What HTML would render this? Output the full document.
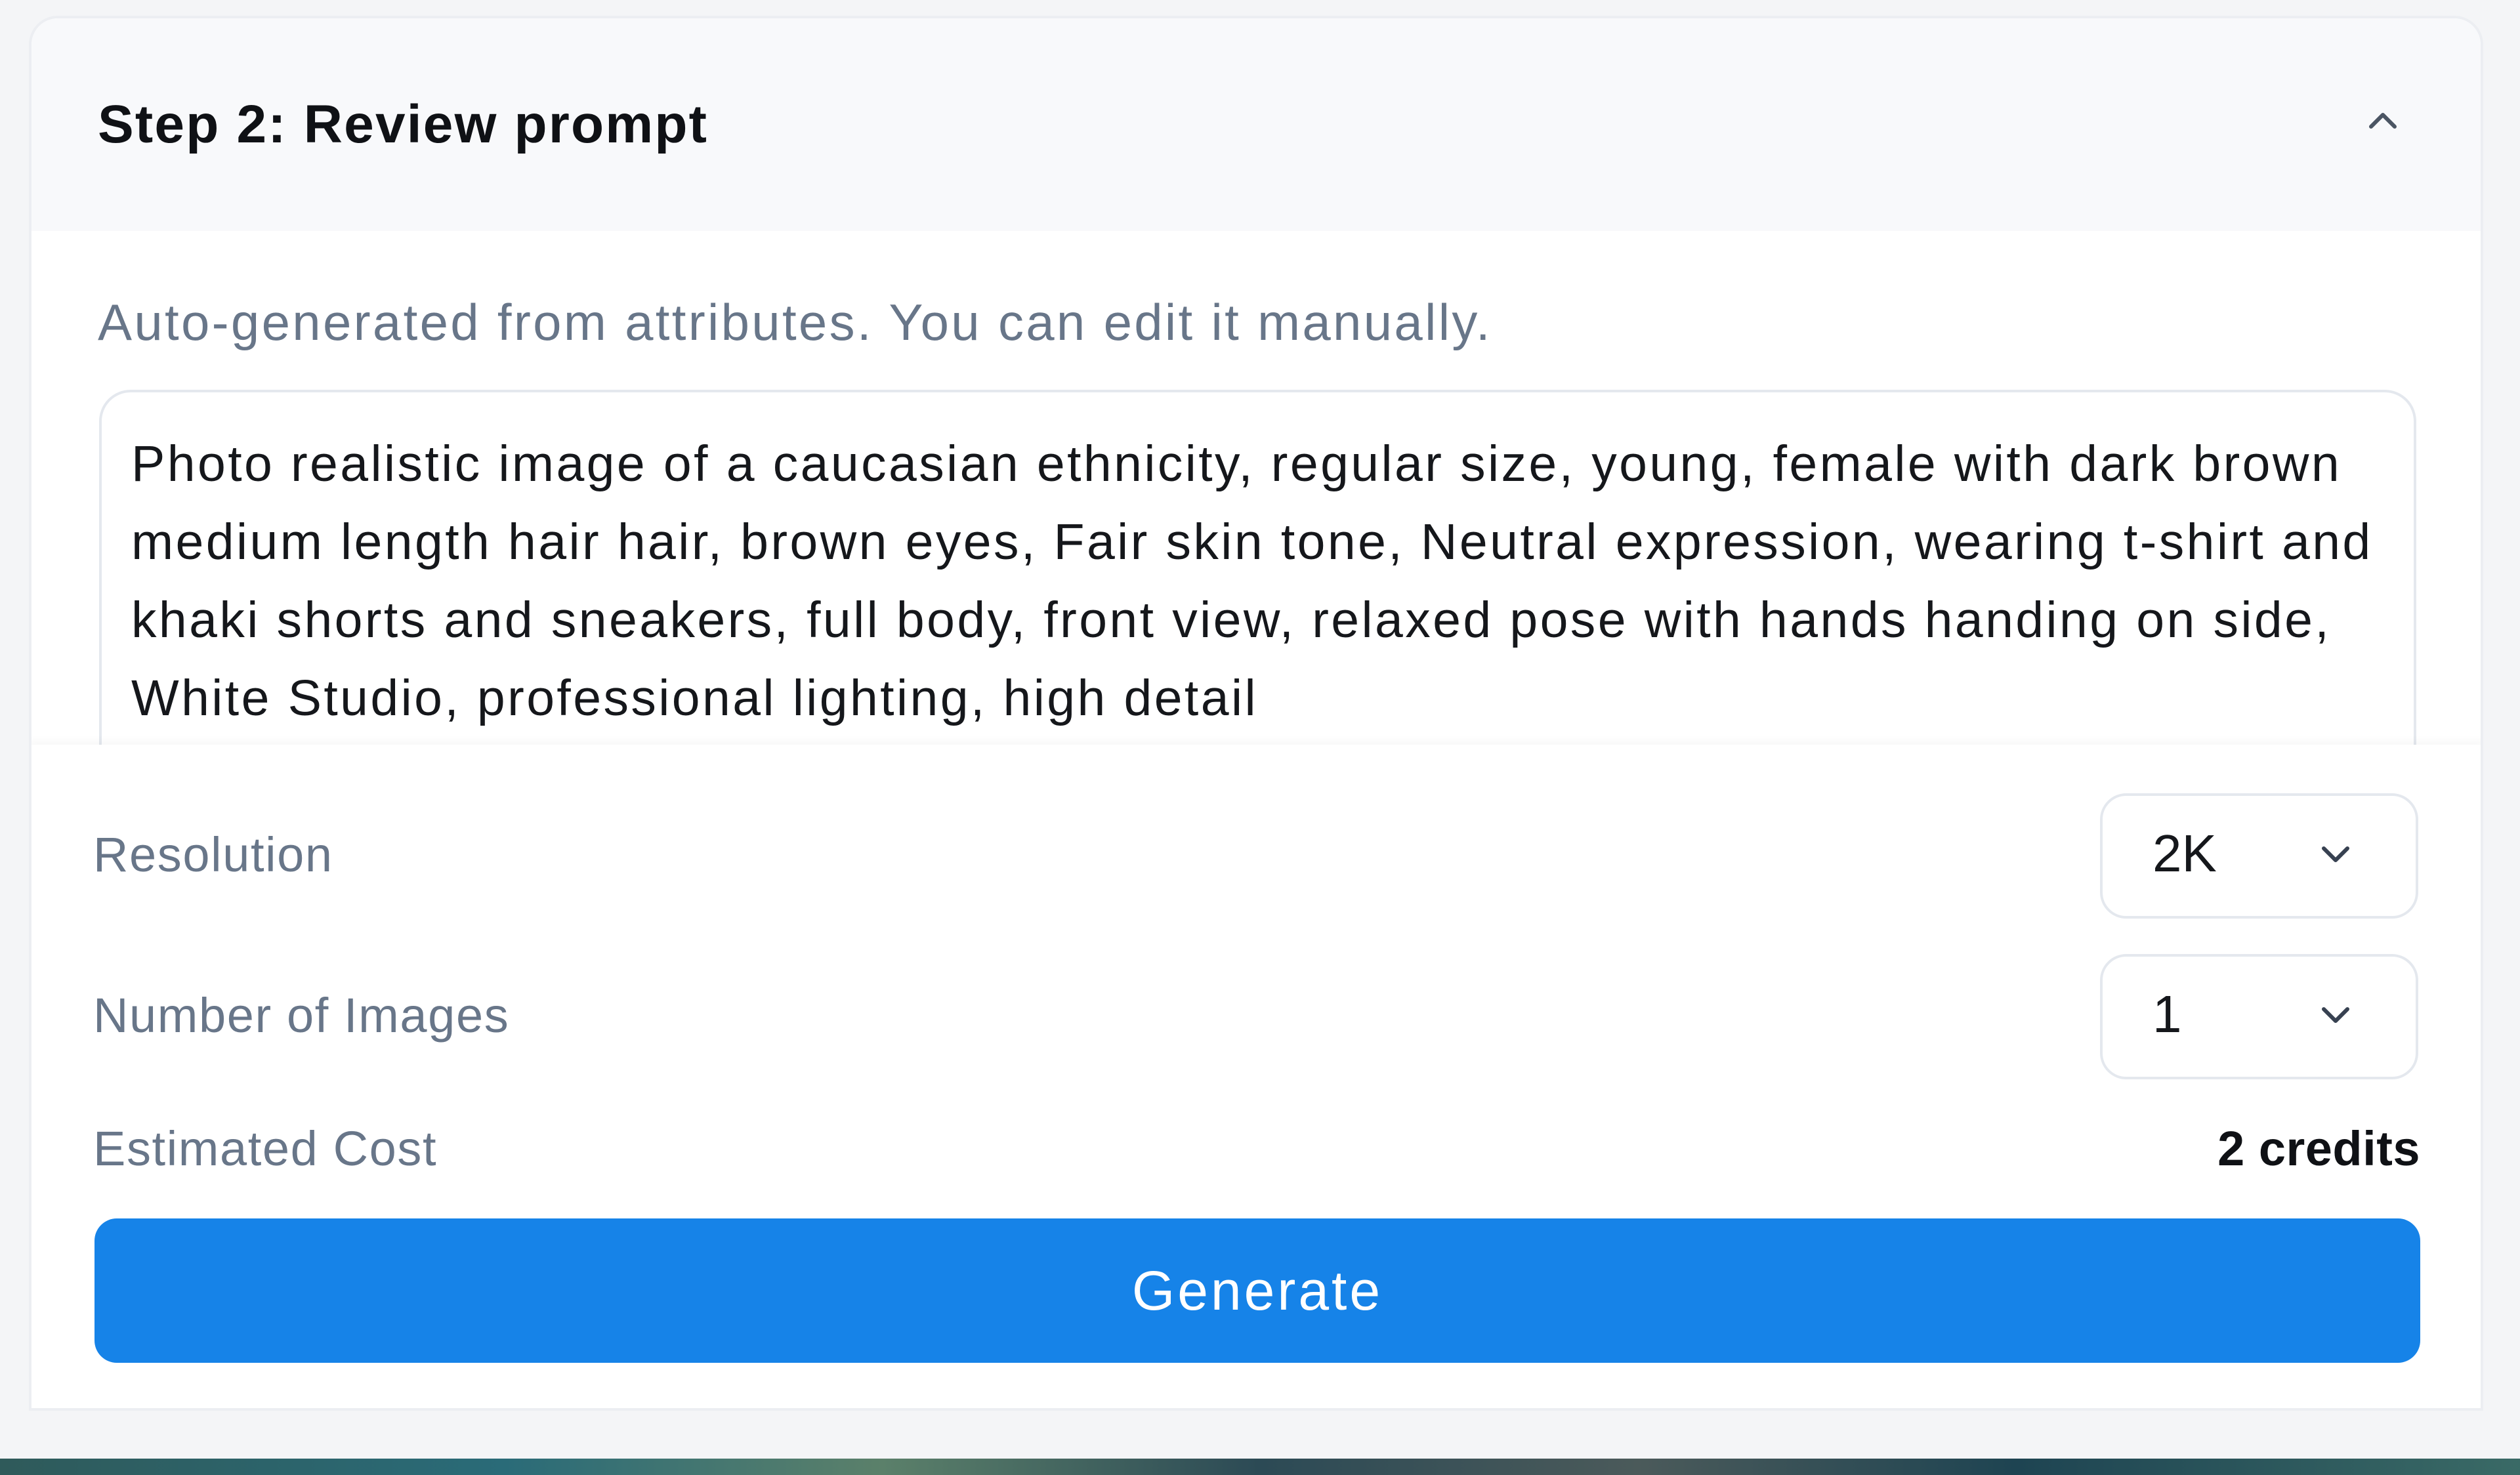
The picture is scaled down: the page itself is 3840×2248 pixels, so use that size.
<!DOCTYPE html>
<html><head><meta charset="utf-8"><style>
*{margin:0;padding:0;box-sizing:border-box}
html,body{width:3840px;height:2248px;overflow:hidden;background:#f4f5f7;font-family:"Liberation Sans",sans-serif;position:relative}
.card{position:absolute;left:44px;top:24px;width:3740px;height:2126px;background:#fff;border:4px solid #eceef2;border-radius:44px 44px 0 0;overflow:hidden}
.head{position:absolute;left:0;top:0;right:0;height:324px;background:#f8f9fb}
.title{position:absolute;left:101px;top:112px;font-size:82px;font-weight:bold;color:#0f1115;line-height:100px;letter-spacing:2.2px}
.chev{position:absolute;left:3553px;top:125px}
.sub{position:absolute;left:101px;top:413px;font-size:78px;color:#687689;line-height:100px;letter-spacing:3.3px}
.ta{position:absolute;left:103px;top:566px;width:3531px;height:700px;border:4px solid #e4e8ee;border-radius:48px}
.tatext{position:absolute;left:45px;top:50px;font-size:77px;line-height:119px;color:#15171b;white-space:nowrap;letter-spacing:3.4px}
.bottom{position:absolute;left:-4px;top:1107px;width:3744px;height:1020px;background:#fff;box-shadow:0 -6px 12px rgba(0,0,0,0.03)}
.lbl{position:absolute;left:98px;font-size:74px;color:#687689;line-height:100px;letter-spacing:1.6px}
.sel{position:absolute;left:3156px;width:485px;height:191px;border:4px solid #e4e8ee;border-radius:40px}
.sel span{position:absolute;left:76px;top:38px;font-size:80px;color:#15171b;line-height:100px}
.sel svg{position:absolute;left:325px;top:70px}
.cost{position:absolute;right:100px;font-size:74px;font-weight:bold;color:#0f1115;line-height:100px;letter-spacing:0.5px}
.btn{position:absolute;left:100px;top:722px;width:3544px;height:220px;background:#1683e8;border-radius:34px;color:#fff;font-size:84px;text-align:center;line-height:220px;letter-spacing:4px}
.strip{position:absolute;left:0;top:2223px;width:3840px;height:25px;background:linear-gradient(90deg,#2f5a5a,#2a6b78 20%,#5b806a 35%,#2c4a55 50%,#4b5a5a 65%,#1e4452 80%,#3a6a66)}
</style></head><body>
<div class="card">
 <div class="head">
  <div class="title">Step 2: Review prompt</div>
  <svg class="chev" width="60" height="60" viewBox="0 0 60 60"><path d="M12 40 L30 22 L48 40" fill="none" stroke="#4b5563" stroke-width="6" stroke-linecap="round" stroke-linejoin="round"/></svg>
 </div>
 <div class="sub">Auto-generated from attributes. You can edit it manually.</div>
 <div class="ta"><div class="tatext">Photo realistic image of a caucasian ethnicity, regular size, young, female with dark brown<br>medium length hair hair, brown eyes, Fair skin tone, Neutral expression, wearing t-shirt and<br>khaki shorts and sneakers, full body, front view, relaxed pose with hands handing on side,<br>White Studio, professional lighting, high detail</div></div>
 <div class="bottom">
  <div class="lbl" style="top:118px">Resolution</div>
  <div class="sel" style="top:74px"><span>2K</span><svg width="60" height="40" viewBox="0 0 60 40"><path d="M12 10 L30 28 L48 10" fill="none" stroke="#374151" stroke-width="6" stroke-linecap="round" stroke-linejoin="round"/></svg></div>
  <div class="lbl" style="top:363px">Number of Images</div>
  <div class="sel" style="top:319px"><span>1</span><svg width="60" height="40" viewBox="0 0 60 40"><path d="M12 10 L30 28 L48 10" fill="none" stroke="#374151" stroke-width="6" stroke-linecap="round" stroke-linejoin="round"/></svg></div>
  <div class="lbl" style="top:566px">Estimated Cost</div>
  <div class="cost" style="top:566px">2 credits</div>
  <div class="btn">Generate</div>
 </div>
</div>
<div class="strip"></div>
</body></html>
